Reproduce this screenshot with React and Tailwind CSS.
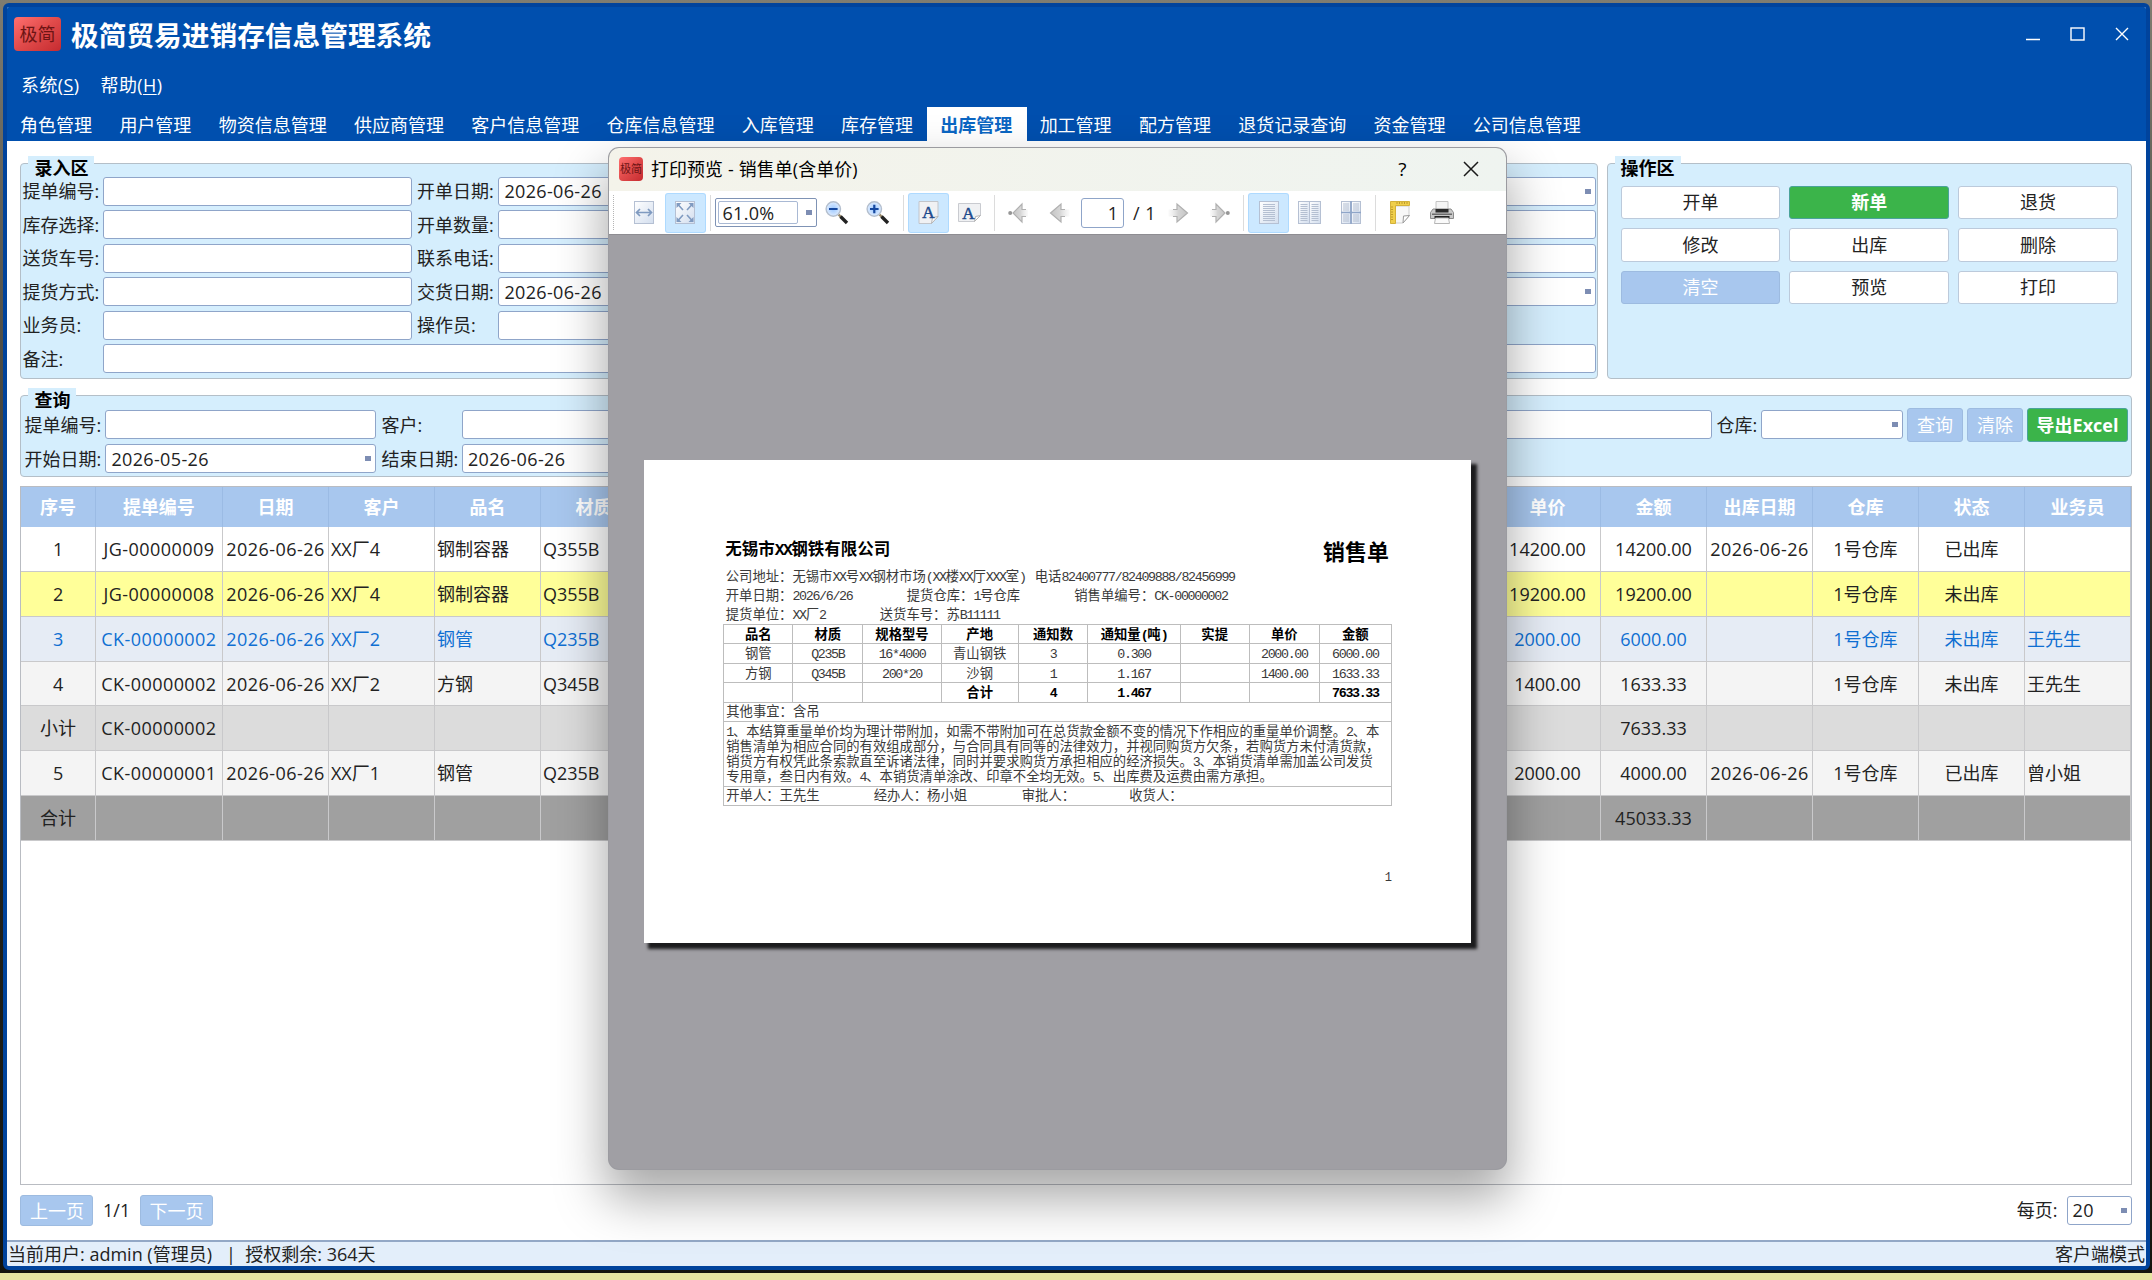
// src/App.jsx
import { clsx } from 'clsx';

const TABS = [
    '角色管理', '用户管理', '物资信息管理', '供应商管理', '客户信息管理', '仓库信息管理', '入库管理',
    '库存管理', '出库管理', '加工管理', '配方管理', '退货记录查询', '资金管理', '公司信息管理',
];
const ACTIVE_TAB = '出库管理';

const ACTIONS = [
    { title: '开单' }, { title: '新单', type: 'success' }, { title: '退货' },
    { title: '修改' }, { title: '出库' }, { title: '删除' },
    { title: '清空', type: 'light' }, { title: '预览' }, { title: '打印' },
];

// Columns between 材质 and 单价 are covered by the preview window
const COLUMNS = [
    { title: '序号', key: 'no' }, { title: '提单编号', key: 'code' }, { title: '日期', key: 'date' },
    { title: '客户', key: 'customer', left: true }, { title: '品名', key: 'name', left: true },
    { title: '材质', key: 'material', left: true },
    { key: 'c1' }, { key: 'c2' }, { key: 'c3' }, { key: 'c4' }, { key: 'c5' }, { key: 'c6' }, { key: 'c7' }, { key: 'c8' },
    { title: '单价', key: 'price' }, { title: '金额', key: 'amount' }, { title: '出库日期', key: 'outDate' },
    { title: '仓库', key: 'store' }, { title: '状态', key: 'status' }, { title: '业务员', key: 'sales', left: true },
];

const ROWS = [
    { bg: 'bg-white', no: '1', code: 'JG-00000009', date: '2026-06-26', customer: 'XX厂4', name: '钢制容器', material: 'Q355B', price: '14200.00', amount: '14200.00', outDate: '2026-06-26', store: '1号仓库', status: '已出库' },
    { bg: 'bg-[#ffff99]', no: '2', code: 'JG-00000008', date: '2026-06-26', customer: 'XX厂4', name: '钢制容器', material: 'Q355B', price: '19200.00', amount: '19200.00', store: '1号仓库', status: '未出库' },
    { bg: 'bg-[#e6ecf5] text-[#0f6fd2]', no: '3', code: 'CK-00000002', date: '2026-06-26', customer: 'XX厂2', name: '钢管', material: 'Q235B', price: '2000.00', amount: '6000.00', store: '1号仓库', status: '未出库', sales: '王先生' },
    { bg: 'bg-[#f4f4f4]', no: '4', code: 'CK-00000002', date: '2026-06-26', customer: 'XX厂2', name: '方钢', material: 'Q345B', price: '1400.00', amount: '1633.33', store: '1号仓库', status: '未出库', sales: '王先生' },
    { bg: 'bg-[#dcdcdc]', no: '小计', code: 'CK-00000002', amount: '7633.33' },
    { bg: 'bg-[#f4f4f4]', no: '5', code: 'CK-00000001', date: '2026-06-26', customer: 'XX厂1', name: '钢管', material: 'Q235B', price: '2000.00', amount: '4000.00', outDate: '2026-06-26', store: '1号仓库', status: '已出库', sales: '曾小姐' },
    { bg: 'bg-[#a0a0a0]', no: '合计', amount: '45033.33' },
];

const BILL_HEAD = ['品名', '材质', '规格型号', '产地', '通知数', '通知量(吨)', '实提', '单价', '金额'];
const BILL_ROWS = [
    ['钢管', 'Q235B', '16*4000', '青山钢铁', '3', '0.300', '', '2000.00', '6000.00'],
    ['方钢', 'Q345B', '200*20', '沙钢', '1', '1.167', '', '1400.00', '1633.33'],
    ['', '', '', '合计', '4', '1.467', '', '', '7633.33'],
];
const TERMS = [
    '1、本结算重量单价均为理计带附加，如需不带附加可在总货款金额不变的情况下作相应的重量单价调整。2、本',
    '销售清单为相应合同的有效组成部分，与合同具有同等的法律效力，并视同购货方欠条，若购货方未付清货款，',
    '销货方有权凭此条索款直至诉诸法律，同时并要求购货方承担相应的经济损失。3、本销货清单需加盖公司发货',
    '专用章，叁日内有效。4、本销货清单涂改、印章不全均无效。5、出库费及运费由需方承担。',
];

const Marker = () => <span className="w-[6px] h-[5px] bg-[#7d8db3] shrink-0" />;

const Field = ({ value, dropdown, className }) => (
    <div className={clsx('h-[29px] bg-white border border-[#8fa5c9] rounded-[3px] flex items-center justify-between pl-[5px] pr-1', className)}>
        <span className="tracking-[0.35px]">{value}</span>
        {dropdown && <Marker />}
    </div>
);

const Group = ({ title, className, children }) => (
    <section className={clsx('relative bg-[#d5eefd] border border-[#b4bfc8] rounded-[4px]', className)}>
        <h3 className="absolute left-[7px] -top-[8px] h-[24px] leading-[24px] px-[6px] bg-[#d5eefd] font-bold text-black">{title}</h3>
        {children}
    </section>
);

const Button = ({ type, className, children }) => (
    <button
        className={clsx(
            'flex items-center justify-center rounded-[3px] border',
            type === 'success' && 'bg-[#3bb44a] border-[#4aa39a] text-white font-bold',
            type === 'light' && 'bg-[#a8c7ee] border-[#9dbbe0] text-white',
            !type && 'bg-white border-[#bccadb] text-[#222]',
            className
        )}
    >
        {children}
    </button>
);

const Logo = ({ className }) => (
    <div className={clsx('flex items-center justify-center rounded-[4px] bg-linear-to-br from-[#ff6f6f] via-[#e04a4a] to-[#c62a30] text-[#6d1414]', className)}>
        极简
    </div>
);

const Header = () => (
    <header className="h-[134px] bg-[#004fae] text-white shrink-0">
        <div className="h-[58px] flex items-center pl-[7px] pr-[17px]">
            <Logo className="w-[47px] h-[34px] mt-[-5px] text-[18px]" />
            <h1 className="ml-[10px] flex-1 text-[27.7px] font-bold leading-none mt-[-1px]">极简贸易进销存信息管理系统</h1>
            <div className="flex items-center gap-[30px] mt-[-4px]">
                <svg width="14" height="14" viewBox="0 0 14 14" stroke="white" strokeWidth="1.4"><path d="M0 12.5h14" /></svg>
                <svg width="15" height="14" viewBox="0 0 15 14" stroke="white" strokeWidth="1.4" fill="none"><rect x="1" y="1" width="13" height="12" /></svg>
                <svg width="14" height="14" viewBox="0 0 14 14" stroke="white" strokeWidth="1.4"><path d="M1 1l12 12M13 1L1 13" /></svg>
            </div>
        </div>
        <div className="h-[41px] flex items-center gap-[21px] pl-[14px] pb-[2px]">
            <span className="tracking-[0.4px]">系统(<u className="underline-offset-2">S</u>)</span>
            <span className="tracking-[0.4px]">帮助(<u className="underline-offset-2">H</u>)</span>
        </div>
        <nav className="flex h-[35px] pt-px">
            {TABS.map((tab) => (
                <div
                    key={tab}
                    className={clsx(
                        'pl-[13.1px] pr-[14.2px] h-full leading-[37px] whitespace-nowrap',
                        tab === ACTIVE_TAB && 'bg-white text-[#0b66c3] font-bold'
                    )}
                >
                    {tab}
                </div>
            ))}
        </nav>
    </header>
);

const EntryForm = () => (
    <Group title="录入区" className="w-[1577.3px] h-[216px] px-[1px] pt-[13px]">
        <div className="grid grid-cols-[80.6px_309px_86.4px_309px_86.4px_309px_86.4px_1fr] gap-y-[4.6px] items-center">
            <label>提单编号:</label><Field />
            <label className="pl-[5px]">开单日期:</label><Field value="2026-06-26" />
            <span /><Field /><span /><Field dropdown />

            <label>库存选择:</label><Field />
            <label className="pl-[5px]">开单数量:</label><Field />
            <span /><Field /><span /><Field />

            <label>送货车号:</label><Field />
            <label className="pl-[5px]">联系电话:</label><Field />
            <span /><Field /><span /><Field />

            <label>提货方式:</label><Field />
            <label className="pl-[5px]">交货日期:</label><Field value="2026-06-26" />
            <span /><Field /><span /><Field dropdown />

            <label>业务员:</label><Field />
            <label className="pl-[5px]">操作员:</label><Field />
            <span /><span /><span /><span />

            <label>备注:</label><Field className="col-span-7" />
        </div>
    </Group>
);

const ActionPanel = () => (
    <Group title="操作区" className="w-[525.5px] h-[216px] pt-[22px] px-[13px]">
        <div className="grid grid-cols-3 gap-x-[9px] gap-y-[9px]">
            {ACTIONS.map((item) => (
                <Button key={item.title} type={item.type} className="h-[33.6px]">{item.title}</Button>
            ))}
        </div>
    </Group>
);

const QueryBar = () => (
    <Group title="查询" className="h-[82px] mt-[16.5px] pt-[12px] pl-[3px] pr-[3px]">
        <div className="flex items-center h-[33px]">
            <label className="w-[81px]">提单编号:</label><Field className="w-[271px]" />
            <label className="w-[85.5px] pl-[5px]">客户:</label><Field className="w-[400px]" />
            <Field className="flex-1 ml-[80px]" />
            <label className="w-[49.5px] pl-[5px]">仓库:</label><Field dropdown className="w-[142px]" />
            <Button type="light" className="w-[56px] h-[34px] ml-[4px]">查询</Button>
            <Button type="light" className="w-[56px] h-[34px] ml-[4px]">清除</Button>
            <Button type="success" className="w-[101px] h-[34px] ml-[4px]">导出Excel</Button>
        </div>
        <div className="flex items-center h-[35px]">
            <label className="w-[81px]">开始日期:</label><Field value="2026-05-26" dropdown className="w-[271px]" />
            <label className="w-[85.5px] pl-[5px]">结束日期:</label><Field value="2026-06-26" dropdown className="w-[271px]" />
        </div>
    </Group>
);

const GRID = 'grid grid-cols-[74.4px_127.2px_repeat(18,1fr)]';

const StockTable = () => (
    <div className="mt-[9.3px] h-[699px] border border-[#b9bcc2]">
        <div className={clsx(GRID, 'h-[40px] bg-[#a8c7ee] text-white font-bold')}>
            {COLUMNS.map((col) => (
                <div key={col.key} className="flex items-center justify-center border-r border-[#9bbbe4]">{col.title}</div>
            ))}
        </div>
        {ROWS.map((row) => (
            <div key={row.no} className={clsx(GRID, 'h-[44.8px]', row.bg)}>
                {COLUMNS.map((col) => (
                    <div
                        key={col.key}
                        className={clsx(
                            'flex items-center border-r border-b border-[#c9c9cb] whitespace-nowrap',
                            col.left ? 'pl-[2px]' : 'justify-center',
                            ['code', 'date', 'outDate'].includes(col.key) && 'tracking-[0.45px]'
                        )}
                    >
                        {row[col.key]}
                    </div>
                ))}
            </div>
        ))}
    </div>
);

const Footer = () => (
    <div className="flex items-center h-[54px] pb-[4px]">
        <Button type="light" className="w-[73px] h-[31.5px] pt-[2px]">上一页</Button>
        <span className="w-[46.5px] text-center">1/1</span>
        <Button type="light" className="w-[73px] h-[31.5px] pt-[2px]">下一页</Button>
        <span className="ml-auto mr-[9px]">每页:</span>
        <Field value="20" dropdown className="w-[65.5px] pl-[3px]" />
    </div>
);

// ---- print preview ----

const ToolButton = ({ active, children }) => (
    <div className={clsx('w-[41px] h-[40px] flex items-center justify-center rounded-[3px]', active && 'bg-[#cce8ff] border border-[#99d1ff]/60')}>
        {children}
    </div>
);

const Divider = () => <div className="w-px h-[36px] mx-[4px] bg-[#dcdcdc]" />;

const PageRect = ({ x = 0.5, w = 19 }) => <rect x={x} y="0.5" width={w} height="22" fill="url(#sheet)" stroke="#b5c0d3" />;

const Lines = ({ x1, x2, ys }) => (
    <path d={ys.map((y) => `M${x1} ${y}H${x2}`).join('')} stroke="#b4bfd1" strokeWidth="1" />
);

const Magnifier = ({ plus }) => (
    <svg width="24" height="24" viewBox="0 0 24 24" fill="none">
        <path d="M13.5 13.5l3 3" stroke="#9a8a6a" strokeWidth="2.4" />
        <path d="M15.5 15.5l6.5 6.5" stroke="#222" strokeWidth="3.4" />
        <circle cx="8.3" cy="8" r="7.2" fill="url(#lens)" stroke="#b4bfce" strokeWidth="1.4" />
        <path d={plus ? 'M4 8h8.6M8.3 3.7v8.6' : 'M4 8h8.6'} stroke="#1548a0" strokeWidth="2.2" />
    </svg>
);

const Arrow = ({ right, dot }) => (
    <svg width="22" height="22" viewBox="0 0 22 22" className={right ? '-scale-x-100' : ''}>
        <path d={dot ? 'M5 11L14 2v5.5h6v7h-6V20z' : 'M1.5 11L12 2v5.5h8.5v7H12V20z'} fill="url(#arrow)" />
        <path d={dot ? 'M18 7.5H14V2L5 11l9 9v-5.5h4' : 'M16 7.5H12V2L1.5 11L12 20v-5.5h4'} fill="none" stroke="#b0b0b0" strokeWidth="1.2" />
        {dot && <circle cx="2.2" cy="11" r="2" fill="#969696" />}
    </svg>
);

const LetterPage = ({ landscape }) => (
    <svg width="23" height="23" viewBox="0 0 23 23">
        {landscape
            ? <path d="M0.5 2.5h22v12l-6 6h-16z" fill="#f0f1f3" stroke="#c9cbd0" />
            : <path d="M2 0.5h19v15l-6.5 7H2z" fill="#f0f1f3" stroke="#c2c5ca" />}
        {landscape
            ? <path d="M22.5 14.5l-6 6 1-5z" fill="#fff" stroke="#b5b5b5" />
            : <path d="M21 15.5l-6.5 7 1-6z" fill="#fff" stroke="#b5b5b5" />}
        <text
            x={landscape ? 10.5 : 11.5}
            y={landscape ? 18 : 17}
            textAnchor="middle"
            className="font-['Liberation_Serif',serif] text-[17px]"
            fill="#1d4a8c"
            stroke="#1d4a8c"
            strokeWidth="0.5"
        >
            A
        </text>
    </svg>
);

const Toolbar = () => (
    <div className="h-[44px] bg-white flex items-center pl-[4px] border-b border-[#8e8d92]">
        <svg width="0" height="0" className="absolute">
            <defs>
                <linearGradient id="sheet" x2="1" y2="1"><stop stopColor="#ffffff" /><stop offset="1" stopColor="#d3deee" /></linearGradient>
                <linearGradient id="arrow"><stop stopColor="#c4c4c4" /><stop offset="0.5" stopColor="#d6d6d6" /><stop offset="1" stopColor="#ededed" stopOpacity="0.3" /></linearGradient>
                <radialGradient id="lens"><stop stopColor="#9cc8ff" /><stop offset="1" stopColor="#deecff" /></radialGradient>
            </defs>
        </svg>
        <div className="h-[35px] border-l-[1.5px] border-dotted border-[#b5b5b5] mr-[9.5px]" />
        <ToolButton>
            <svg width="20" height="23" viewBox="0 0 20 23">
                <PageRect />
                <path d="M2.5 11.5h15M6 8l-3.5 3.5L6 15M14 8l3.5 3.5L14 15" fill="none" stroke="#7f9ac0" strokeWidth="1.7" />
            </svg>
        </ToolButton>
        <ToolButton active>
            <svg width="20" height="23" viewBox="0 0 20 23">
                <PageRect />
                <path d="M2.5 3l5.5 6M17.5 3L12 9M2.5 20L8 14M17.5 20L12 14" stroke="#7f9ac0" strokeWidth="1.6" />
                <path d="M1.5 2h5l-5 5zM18.5 2h-5l5 5zM1.5 21h5l-5-5zM18.5 21h-5l5-5z" fill="#7f9ac0" />
            </svg>
        </ToolButton>
        <Divider />
        <div className="w-[102px] h-[29px] border border-[#7f93b5] rounded-[2px] bg-white flex items-center p-[2px] pr-[4px] justify-between">
            <div className="w-[80px] h-full border border-[#a9b9d4] rounded-[2px] flex items-center pl-[4px] text-[18px] tracking-[0.3px]">61.0%</div>
            <Marker />
        </div>
        <ToolButton><Magnifier /></ToolButton>
        <ToolButton><Magnifier plus /></ToolButton>
        <Divider />
        <ToolButton active><LetterPage /></ToolButton>
        <ToolButton><LetterPage landscape /></ToolButton>
        <Divider />
        <ToolButton><Arrow dot /></ToolButton>
        <ToolButton><Arrow /></ToolButton>
        <div className="w-[43.6px] h-[30px] border border-[#8fa5c9] rounded-[3px] flex items-center justify-end pr-[5px]">1</div>
        <span className="w-[33px] pl-[9px] whitespace-nowrap tracking-[0.5px]">/ 1</span>
        <ToolButton><Arrow right /></ToolButton>
        <ToolButton><Arrow right dot /></ToolButton>
        <Divider />
        <ToolButton active>
            <svg width="20" height="23" viewBox="0 0 20 23"><PageRect /><Lines x1={4} x2={16} ys={[3.5, 5.5, 7.5, 9.5, 11.5, 13.5, 15.5, 17.5, 19.5]} /></svg>
        </ToolButton>
        <ToolButton>
            <svg width="23" height="23" viewBox="0 0 23 23">
                <PageRect x={0.5} w={11} /><PageRect x={11.5} w={11} />
                <Lines x1={2.5} x2={9.5} ys={[3.5, 5.5, 7.5, 9.5, 11.5, 13.5, 15.5, 17.5, 19.5]} />
                <Lines x1={13.5} x2={20.5} ys={[3.5, 5.5, 7.5, 9.5, 11.5, 13.5, 15.5, 17.5, 19.5]} />
            </svg>
        </ToolButton>
        <ToolButton>
            <svg width="20" height="23" viewBox="0 0 20 23">
                <PageRect x={0.5} w={9} /><PageRect x={10.5} w={9} />
                <path d="M0 11.5h20M10 0v23" stroke="#8ea5c8" strokeWidth="1.5" />
                <Lines x1={2} x2={8} ys={[3, 5, 7, 9, 14, 16, 18, 20]} />
                <Lines x1={12} x2={18} ys={[3, 5, 7, 9, 14, 16, 18, 20]} />
            </svg>
        </ToolButton>
        <Divider />
        <ToolButton>
            <svg width="21" height="23" viewBox="0 0 21 23">
                <path d="M5 5h14v10l-6 7H5z" fill="#f8f8f8" stroke="#d0d0d0" />
                <path d="M19.5 14.5l-6.5 7.5 0.5-7z" fill="#fff" stroke="#9a9a9a" />
                <path d="M0.5 0.5h19v4h-14v18h-5z" fill="#f0cf4b" stroke="#d3b13a" />
                <path d="M7 1v2M9.5 1v2M12 1v2M14.5 1v2M17 1v2M1 6h2M1 8.5h2M1 11h2M1 13.5h2M1 16h2M1 18.5h2" stroke="#b08d24" strokeWidth="0.8" />
            </svg>
        </ToolButton>
        <ToolButton>
            <svg width="24" height="23" viewBox="0 0 24 23">
                <path d="M6 0.5h12v9H6z" fill="#f5f5f5" stroke="#c4c4c4" />
                <path d="M3 8h18l2.5 3.5v6H0.5v-6z" fill="#c9c9c9" stroke="#8b8b8b" />
                <path d="M5.5 8h13v3.5h-13z" fill="#2b2b2b" />
                <path d="M2 13.2h20" stroke="#6b6b6b" strokeWidth="1.5" />
                <path d="M4.5 15h15v2.5h-15z" fill="#222" />
                <path d="M5.5 17h13l1 5.5h-15z" fill="#fafafa" stroke="#b5b5b5" />
            </svg>
        </ToolButton>
    </div>
);

// The printed form sets every latin character half an em wide
const Txt = ({ children }) =>
    children.split(/([\x20-\x7e]+)/).map((part, i) =>
        /^[\x20-\x7e]/.test(part) ? (
            <span key={i} className="leading-none tracking-[-0.1em] font-['Liberation_Mono',monospace]">{part}</span>
        ) : part
    );

const BILL_GRID = 'grid grid-cols-[69px_70px_78.4px_77px_69.6px_92.4px_69px_70.3px_1fr] h-[19.4px] leading-[17px] border-b border-[#bdbdbd]';

const Bill = () => (
    <div className="ml-[34.8px] mt-[225px] w-[827px] h-[482.7px] bg-white pt-[77px] pl-[79.5px] pr-[79px] shadow-[5px_5px_3px_1px_#1c1c1e] font-['Noto_Sans_CJK_SC',sans-serif] text-[13.33px] text-[#3a3a3a] whitespace-nowrap">
        <div className="flex justify-between h-[29.5px] pl-[2px] pr-[3px] font-bold text-black">
            <span className="text-[16.5px] leading-[22px]"><Txt>无锡市XX钢铁有限公司</Txt></span>
            <span className="text-[21.9px] leading-[27px]">销售单</span>
        </div>
        <div className="flex h-[19.3px] leading-[17px] pl-[2.5px]">
            <span className="w-[309px]"><Txt>公司地址：无锡市XX号XX钢材市场(XX楼XX厅XXX室)</Txt></span>
            <span><Txt>电话82400777/82409888/82456999</Txt></span>
        </div>
        <div className="flex h-[19.3px] leading-[17px] pl-[2.5px]">
            <span className="w-[181px]"><Txt>开单日期：2026/6/26</Txt></span>
            <span className="w-[167.5px]"><Txt>提货仓库：1号仓库</Txt></span>
            <span><Txt>销售单编号：CK-00000002</Txt></span>
        </div>
        <div className="flex h-[19px] leading-[17px] pl-[2.5px]">
            <span className="w-[154px]"><Txt>提货单位：XX厂2</Txt></span>
            <span><Txt>送货车号：苏B11111</Txt></span>
        </div>
        <div className="border-t border-x border-[#bdbdbd]">
            <div className={clsx(BILL_GRID, 'font-bold text-black')}>
                {BILL_HEAD.map((cell) => (
                    <div key={cell} className="text-center border-r border-[#bdbdbd] last:border-r-0"><Txt>{cell}</Txt></div>
                ))}
            </div>
            {BILL_ROWS.map((row, i) => (
                <div key={i} className={clsx(BILL_GRID, i === 2 && 'font-bold text-black')}>
                    {row.map((cell, j) => (
                        <div key={j} className="h-full text-center border-r border-[#bdbdbd] last:border-r-0"><Txt>{cell}</Txt></div>
                    ))}
                </div>
            ))}
            <div className="h-[19.4px] leading-[16px] border-b border-[#bdbdbd] pl-[2px]">其他事宜：含吊</div>
            <div className="h-[64.6px] pt-px border-b border-[#bdbdbd] pl-[2px]">
                {TERMS.map((line) => (
                    <p key={line} className="h-[15px] leading-[15px]"><Txt>{line}</Txt></p>
                ))}
            </div>
            <div className="h-[19.7px] leading-[16px] border-b border-[#bdbdbd] pl-[2px] flex">
                <span className="w-[147.5px]">开单人：王先生</span>
                <span className="w-[148px]">经办人：杨小姐</span>
                <span className="w-[107.5px]">审批人：</span>
                <span>收货人：</span>
            </div>
        </div>
        <p className="mt-[61px] text-right text-[12px] leading-[18px] pr-[1px]"><Txt>1</Txt></p>
    </div>
);

const PreviewDialog = () => (
    <div className="absolute left-[609px] top-[148px] w-[896.5px] h-[1021px] rounded-[10px] overflow-hidden bg-[#a09fa4] ring-1 ring-[#9b9ba0] shadow-[0_26px_50px_4px_rgba(0,0,0,0.34)]">
        <div className="h-[43px] bg-linear-to-r from-[#f4f3ea] to-[#eff4f0] flex items-center pl-[10px] pr-[27px] pb-[2px] text-black">
            <Logo className="w-[24px] h-[24px] text-[11px]" />
            <span className="ml-[8px] flex-1 text-[17.9px] tracking-[0.15px]">打印预览 - 销售单(含单价)</span>
            <span className="text-[19px] mr-[56px]">?</span>
            <svg width="16" height="16" viewBox="0 0 16 16" stroke="#1a1a1a" strokeWidth="1.5"><path d="M1 1l14 14M15 1L1 15" /></svg>
        </div>
        <Toolbar />
        <div className="flow-root"><Bill /></div>
    </div>
);

const App = () => (
    <div className="relative w-[2152px] h-[1280px] overflow-hidden pt-[3px] pl-[3px] pr-[2px] bg-linear-to-b from-[#7f7c70] via-[#2b2a24] to-[#14140d] font-['Open_Sans','Noto_Sans_CJK_SC',sans-serif] text-[18px] leading-[24px] text-[#222]">
        <div className="h-[1267px] border-4 border-[#00439c] rounded-[6px] bg-white flex flex-col overflow-hidden">
            <Header />
            <main className="flex-1 flex flex-col pl-[13.4px] pr-[14px] pt-[21.5px]">
                <div className="flex justify-between">
                    <EntryForm />
                    <ActionPanel />
                </div>
                <QueryBar />
                <StockTable />
                <Footer />
            </main>
            <div className="h-[26.5px] shrink-0 bg-[#e3eefa] border-t-2 border-[#93a8c6] flex items-center justify-between pl-px pr-px">
                <span className="whitespace-pre">当前用户: admin (管理员)   |  授权剩余: 364天</span>
                <span>客户端模式</span>
            </div>
        </div>
        <div className="mt-[3px] -ml-[3px] -mr-[2px] h-[7px] bg-[#e6e5a0]" />
        <PreviewDialog />
    </div>
);

export default App;
